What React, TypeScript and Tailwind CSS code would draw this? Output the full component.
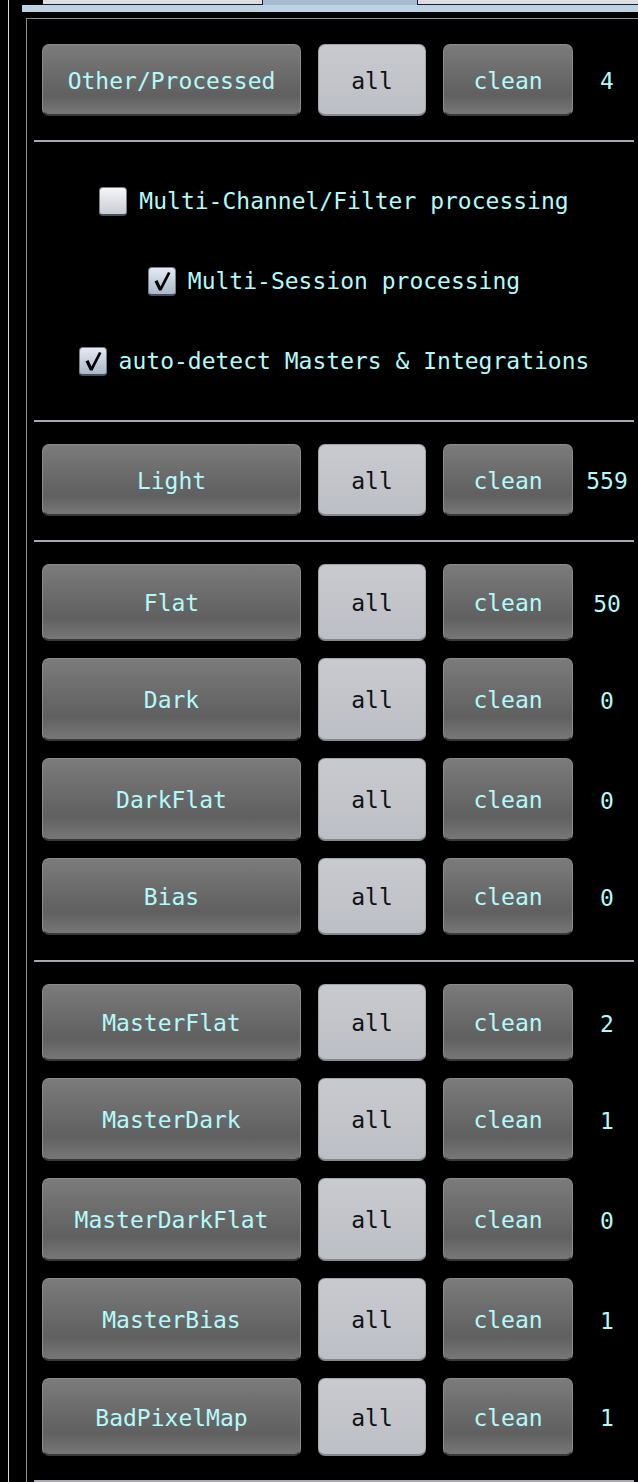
import React from 'react';

const mono = "font-['DejaVu_Sans_Mono','Liberation_Mono',monospace]";

type Row = { label: string; count: number; h: string };

const flatGroup: Row[] = [
  { label: 'Flat', count: 50, h: 'h-[77px]' },
  { label: 'Dark', count: 0, h: 'h-[83px]' },
  { label: 'DarkFlat', count: 0, h: 'h-[83px]' },
  { label: 'Bias', count: 0, h: 'h-[77px]' },
];

const masterGroup: Row[] = [
  { label: 'MasterFlat', count: 2, h: 'h-[77px]' },
  { label: 'MasterDark', count: 1, h: 'h-[83px]' },
  { label: 'MasterDarkFlat', count: 0, h: 'h-[83px]' },
  { label: 'MasterBias', count: 1, h: 'h-[83px]' },
  { label: 'BadPixelMap', count: 1, h: 'h-[78px]' },
];

const darkBtn =
  'flex items-center justify-center pt-[3px] rounded-[7px] border border-[#8c8c8c] border-b-2 border-b-[#383838] bg-[linear-gradient(180deg,#7b7b7b_0%,#686868_50%,#606060_72%,#777777_100%)] text-[#b4fafa]';

const FileRow = ({ row }: { row: Row }) => (
  <div className={`flex items-stretch gap-[17px] pl-[8px] ${row.h}`}>
    <div className={`w-[259px] ${darkBtn}`}>{row.label}</div>
    <div className="w-[108px] flex items-center justify-center pt-[3px] rounded-[7px] border border-[#a2a4aa] border-b-2 border-b-[#86888e] bg-[linear-gradient(180deg,#c8cacf,#bdbfc6)] text-[#111]">
      all
    </div>
    <div className={`w-[130px] ${darkBtn}`}>clean</div>
    <div className="w-[54px] -ml-[10px] pt-[3px] flex items-center justify-center text-[#b4fafa]">
      {row.count}
    </div>
  </div>
);

const Divider = () => <div className="h-[2px] bg-[#a8a8b0]" />;

const Check = ({ checked, label }: { checked: boolean; label: string }) => (
  <div className="h-[80px] flex items-center justify-center gap-[12px]">
    <div
      className={`w-[28px] h-[29px] rounded-[4px] border border-[#7a7e86] border-b-2 border-b-[#4a4e56] flex items-center justify-center ${
        checked
          ? 'bg-[linear-gradient(180deg,#e4eaf2,#a9b9cc)]'
          : 'bg-[linear-gradient(180deg,#f6f6f8,#c9ccd4)]'
      }`}
    >
      {checked && (
        <svg width="22" height="22" viewBox="0 0 22 22">
          <path d="M3.5 11.5 L6.5 10 L9.5 16.5 L17 2 L19.5 3 L10.5 20.5 L8 20.5 Z" fill="#000" />
        </svg>
      )}
    </div>
    <span className="text-[#b4fafa]">{label}</span>
  </div>
);

export default function App() {
  return (
    <div className={`w-[638px] h-[1482px] bg-black pl-[8px] overflow-hidden text-[23px] leading-none ${mono}`}>
      <div className="h-full border-l border-[#dcdce4] flex flex-col">
        {/* tab strip */}
        <div className="ml-[13px] h-[12px] flex flex-col">
          <div className="h-[5px] flex">
            <div className="w-[21px] bg-black" />
            <div className="w-[220px] bg-[#dedee2] border-b border-r border-[#1a1e2e]" />
            <div className="w-[154px] bg-[#a6bbd0]" />
            <div className="flex-1 bg-[#dedee2] border-b border-l border-[#1a1e2e]" />
          </div>
          <div className="h-[7px] bg-[#bed2e4]" />
        </div>

        {/* frame */}
        <div className="ml-[17px] mt-[6px] flex-1 border-l border-t border-[#8e8e96] pl-[7px] pr-[4px] flex flex-col">
          <div className="pt-[25px] pb-[24px]">
            <FileRow row={{ label: 'Other/Processed', count: 4, h: 'h-[72px]' }} />
          </div>
          <Divider />
          <div className="py-[19px]">
            <Check checked={false} label="Multi-Channel/Filter processing" />
            <Check checked label="Multi-Session processing" />
            <Check checked label="auto-detect Masters & Integrations" />
          </div>
          <Divider />
          <div className="pt-[22px] pb-[24px]">
            <FileRow row={{ label: 'Light', count: 559, h: 'h-[72px]' }} />
          </div>
          <Divider />
          <div className="pt-[22px] pb-[25px] flex flex-col gap-[17px]">
            {flatGroup.map((r) => (
              <FileRow key={r.label} row={r} />
            ))}
          </div>
          <Divider />
          <div className="pt-[22px] pb-[24px] flex flex-col gap-[17px]">
            {masterGroup.map((r) => (
              <FileRow key={r.label} row={r} />
            ))}
          </div>
          <Divider />
        </div>
      </div>
    </div>
  );
}
